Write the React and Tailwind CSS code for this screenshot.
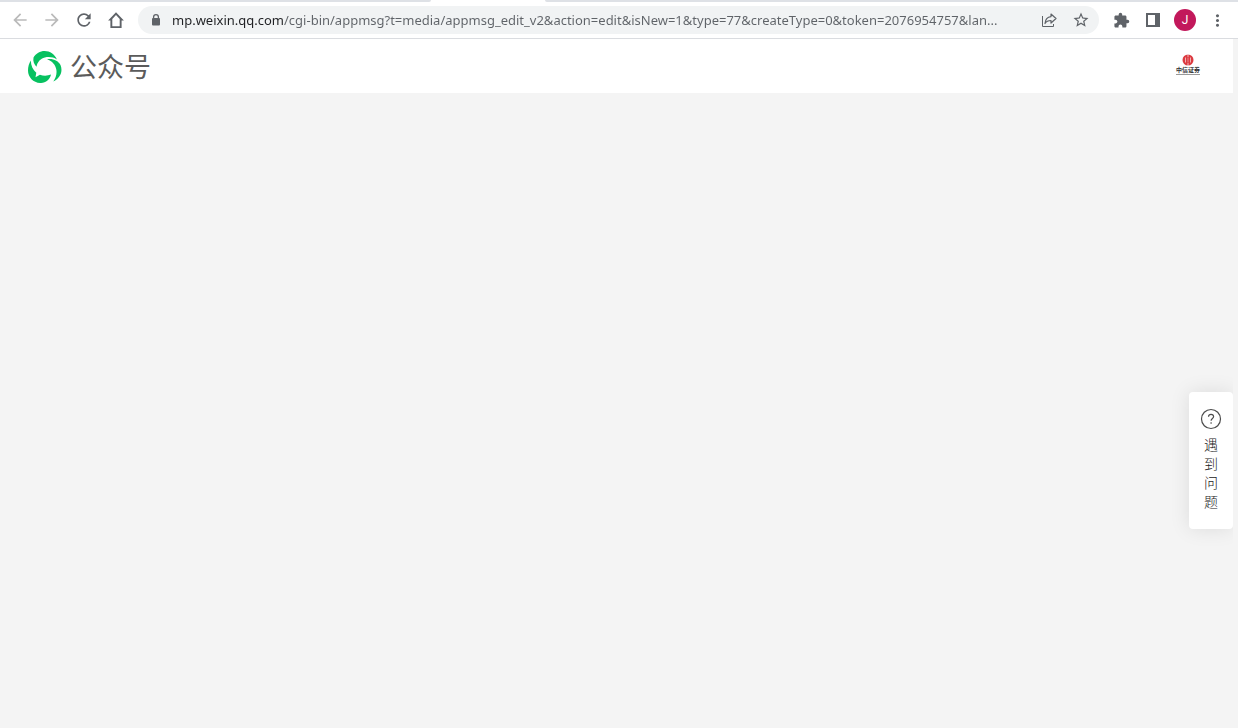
import {
  MdArrowBack,
  MdArrowForward,
  MdExtension,
  MdMoreVert,
  MdRefresh,
  MdStarBorder,
} from "react-icons/md";

const url =
  "mp.weixin.qq.com/cgi-bin/appmsg?t=media/appmsg_edit_v2&action=edit&isNew=1&type=77&createType=0&token=2076954757&lan...";

function ToolButton({ label, disabled, children }) {
  return (
    <button
      type="button"
      aria-label={label}
      disabled={disabled}
      className="flex h-7 w-8 shrink-0 items-center justify-center rounded-full text-[#5f6368] disabled:text-[#bababa]"
    >
      {children}
    </button>
  );
}

function HomeIcon() {
  return (
    <svg width="16" height="16" viewBox="0 0 16 16" fill="currentColor" aria-hidden>
      <path fillRule="evenodd" d="M8 .3L15.900 8.500H13.600V16H2.400V8.500H.1zM8 3.100L4.300 6.900V14.200h7.400V6.900z" />
    </svg>
  );
}

function LockIcon() {
  return (
    <svg width="16" height="14" viewBox="0 0 16 14" className="mr-2 shrink-0 text-[#5f6368]" aria-hidden>
      <path d="M5.600 6.500V4a2.400 2.400 0 0 1 4.800 0v2.500" fill="none" stroke="currentColor" strokeWidth="1.300" />
      <rect x="4" y="5" width="8" height="7.500" rx="1" fill="currentColor" />
    </svg>
  );
}

function ShareIcon() {
  return (
    <svg width="16" height="16" viewBox="0 0 16 16" fill="none" stroke="currentColor" aria-hidden>
      <path d="M1.500 4v10.500h11V12" />
      <path
        d="M10 2l5 4.500-5 4.500V8.500C7 8.500 5.200 9.500 4 11.500 4.300 7.500 6.500 5 10 4.600z"
        strokeWidth="1.200"
        strokeLinejoin="round"
      />
    </svg>
  );
}

function SidePanelIcon() {
  return (
    <svg width="14" height="14" viewBox="0 0 14 14" fill="currentColor" aria-hidden>
      <path fillRule="evenodd" d="M0 0h14v14H0zM2 2v10h7V2z" />
    </svg>
  );
}

function MpLogo() {
  return (
    <svg width="34" height="34" viewBox="0 -2 34 34" fill="#07c160" aria-hidden>
      <path d="M5.500 6.500C8 2.500 12 0 16.600 0c5.400 0 10.200 3.300 12.300 8.400-3.500-2.200-8-3-12-1.900-4.600 1.300-7.700 4.600-8.300 9.300C6.300 13.500 4.700 10.300 5.500 6.500z" />
      <path d="M19 8.300c6-1 11.500 1.500 13.600 6 2.300 5.700.1 12.700-7.300 16.200 2.400-3.500 3.700-7.300 3.100-11.500-.7-4.900-4.200-9-9.400-10.700z" />
      <path d="M2.800 9.500c.2 5.300 2 9 5.500 12.200L7.500 26.200l4.400-2.400c3.700 1.400 7.700 1.200 11.100-.2-1 5-5.500 8.600-10.800 8.400C5.300 31.600 0 26.300 0 19.500c0-3.900 1.100-7.300 2.800-10z" />
    </svg>
  );
}

function AccountMark() {
  return (
    <span className="flex w-6 flex-col items-center pb-1">
      <svg width="12" height="12" viewBox="0 0 12 12" aria-hidden>
        <circle cx="6" cy="6" r="5.500" fill="#dc3a40" />
        <path d="M3.500 3.500v5M8.500 3.500v5M6 0v3M6 9v3" stroke="#fff" strokeWidth=".6" />
        <path d="M6 3.500v5" stroke="#fff" strokeWidth=".4" />
      </svg>
      <span className="text-[6px] leading-[8px] font-bold whitespace-nowrap text-[#333]">中信证券</span>
      <span className="h-px w-6 bg-[#999]" />
    </span>
  );
}

function BrowserBar() {
  return (
    <div className="shrink-0 border-b border-[#dadce0] bg-white">
      <div className="flex h-0.5">
        <div className="w-[431px] rounded-br bg-[#dee1e6]" />
        <div className="w-[114px]" />
        <div className="flex-1 rounded-bl bg-[#dee1e6]" />
      </div>
      <div className="flex h-9 items-center pr-[5px] pl-1">
        <ToolButton label="Back" disabled>
          <MdArrowBack size={20} />
        </ToolButton>
        <ToolButton label="Forward" disabled>
          <MdArrowForward size={20} />
        </ToolButton>
        <ToolButton label="Reload">
          <MdRefresh size={20} />
        </ToolButton>
        <ToolButton label="Home">
          <HomeIcon />
        </ToolButton>
        <div className="mx-1.5 flex h-7 min-w-0 flex-1 items-center rounded-full bg-[#f1f3f4] pr-0.5 pl-2.5">
          <LockIcon />
          {/* host is drawn darker than the rest of the address */}
          <input
            type="text"
            aria-label="Address"
            readOnly
            value={url}
            className="min-w-0 flex-1 bg-[linear-gradient(to_right,#202124_112px,#5f6368_112px)] bg-clip-text font-['Noto_Sans',sans-serif] text-[13px] leading-5 text-transparent outline-none"
          />
          <ToolButton label="Share">
            <ShareIcon />
          </ToolButton>
          <ToolButton label="Bookmark">
            <MdStarBorder size={18} />
          </ToolButton>
        </div>
        <ToolButton label="Extensions">
          <MdExtension size={17} />
        </ToolButton>
        <ToolButton label="Side panel">
          <SidePanelIcon />
        </ToolButton>
        <ToolButton label="Profile">
          <span className="flex size-[22px] items-center justify-center rounded-full bg-[#c2185b] font-[Roboto,sans-serif] text-xs text-white">
            J
          </span>
        </ToolButton>
        <ToolButton label="Menu">
          <MdMoreVert size={19} />
        </ToolButton>
      </div>
    </div>
  );
}

export default function App() {
  return (
    <div className="flex min-h-screen flex-col bg-[#f4f4f4] font-['Noto_Sans_CJK_SC',sans-serif]">
      <BrowserBar />
      <div className="relative mr-[5px] flex flex-1 flex-col overflow-hidden">
        <header className="flex h-[54px] items-center justify-between bg-white pr-[33px] pl-7">
          <a href="#home" className="flex items-center gap-2">
            <MpLogo />
            <span className="text-[27px] leading-8 text-[#5b5b5b]">公众号</span>
          </a>
          <a href="#account" aria-label="中信证券">
            <AccountMark />
          </a>
        </header>
        <main className="flex-1" />
        <button
          type="button"
          className="absolute top-[353px] right-0 flex w-11 flex-col items-center gap-[5px] rounded bg-white pt-4 pb-[18px] text-[#4c4c4c] shadow-[0_0_20px_rgba(0,0,0,0.1)]"
        >
          <svg width="22" height="22" viewBox="0 0 22 22" fill="none" stroke="currentColor" strokeWidth="1.200" aria-hidden>
            <circle cx="11" cy="11" r="9.500" />
            <path d="M8.500 8.800C8.500 7.200 9.500 6.300 11 6.300s2.600.9 2.600 2.300c0 1.900-2.500 2-2.500 4.200" />
            <path d="M11.100 14.200v1.500" />
          </svg>
          <span className="w-3.5 text-sm leading-[19px] font-light text-[#222]">遇到问题</span>
        </button>
      </div>
    </div>
  );
}
